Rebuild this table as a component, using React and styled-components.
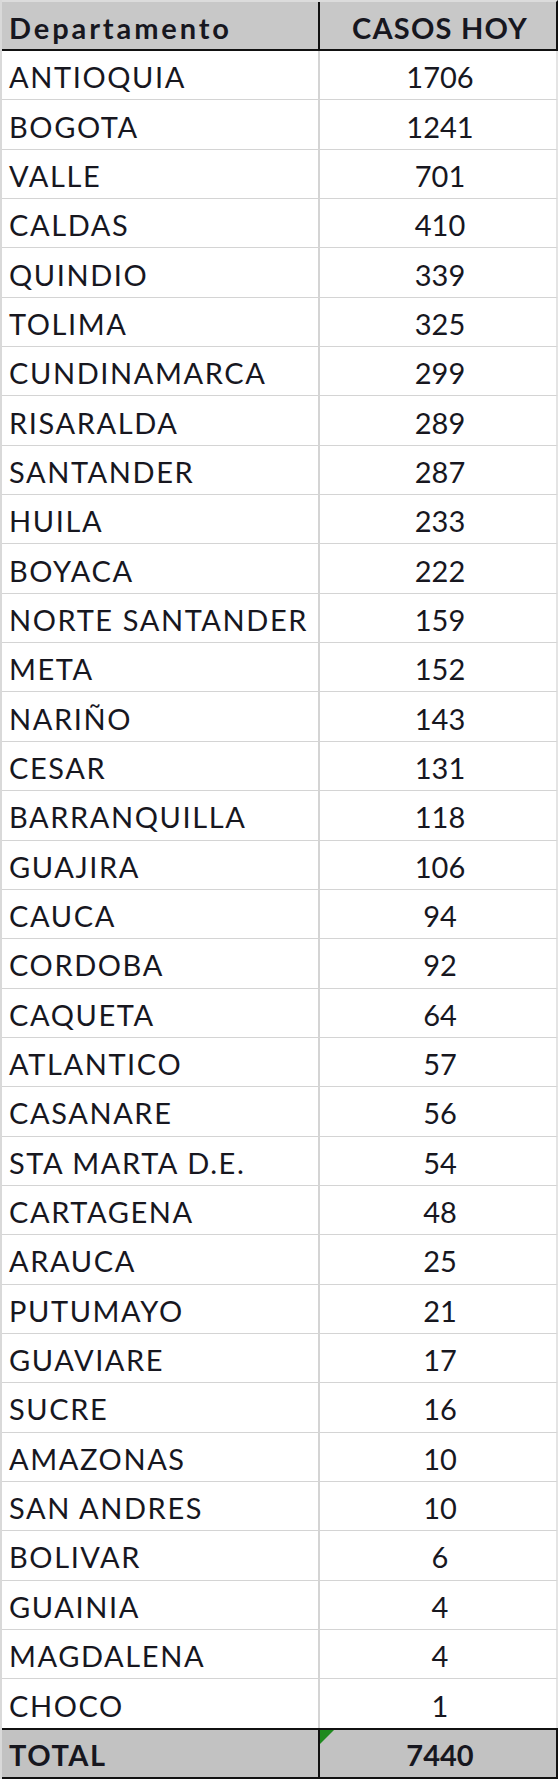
import React from "react";
import styled, { createGlobalStyle, css } from "styled-components";

const Global = createGlobalStyle`
  html, body { margin: 0; padding: 0; background: #ffffff; }
  body { font-family: Lato, "Open Sans", "Liberation Sans", sans-serif; }
`;

const rows = [
  ["ANTIOQUIA", 1706],
  ["BOGOTA", 1241],
  ["VALLE", 701],
  ["CALDAS", 410],
  ["QUINDIO", 339],
  ["TOLIMA", 325],
  ["CUNDINAMARCA", 299],
  ["RISARALDA", 289],
  ["SANTANDER", 287],
  ["HUILA", 233],
  ["BOYACA", 222],
  ["NORTE SANTANDER", 159],
  ["META", 152],
  ["NARIÑO", 143],
  ["CESAR", 131],
  ["BARRANQUILLA", 118],
  ["GUAJIRA", 106],
  ["CAUCA", 94],
  ["CORDOBA", 92],
  ["CAQUETA", 64],
  ["ATLANTICO", 57],
  ["CASANARE", 56],
  ["STA MARTA D.E.", 54],
  ["CARTAGENA", 48],
  ["ARAUCA", 25],
  ["PUTUMAYO", 21],
  ["GUAVIARE", 17],
  ["SUCRE", 16],
  ["AMAZONAS", 10],
  ["SAN ANDRES", 10],
  ["BOLIVAR", 6],
  ["GUAINIA", 4],
  ["MAGDALENA", 4],
  ["CHOCO", 1],
];

const Sheet = styled.div`
  width: 558px;
  display: flex;
  flex-direction: column;
  border-left: 2px solid #d9d9d9;
  box-sizing: border-box;
  color: #17171f;
`;

const Row = styled.div`
  display: grid;
  grid-template-columns: 318px 1fr;
  box-sizing: border-box;
  ${(p) =>
    p.$kind === "body"
      ? css`
          height: 49.35px;
          background: #ffffff;
          border-bottom: 1px solid #d4d4d4;
          border-right: 2px solid #e4e4e4;
        `
      : css`
          height: 51px;
          font-weight: 700;
          border-right: 2px solid #111111;
          border-bottom: 2px solid #111111;
        `}
  ${(p) =>
    p.$kind === "head" &&
    css`
      background: #c8c8c8;
      border-top: 2px solid #dcdcdc;
    `}
  ${(p) =>
    p.$kind === "total" &&
    css`
      background: #c2c2c2;
      border-top: 2px solid #111111;
      margin-top: -1px;
    `}
`;

const Cell = styled.div`
  position: relative;
  display: flex;
  align-items: center;
  box-sizing: border-box;
  font-size: 29px;
  line-height: 1;
  padding-top: 3px;
  white-space: nowrap;
  letter-spacing: ${(p) => p.$spacing || 0}px;
  ${(p) =>
    p.$num
      ? css`
          justify-content: center;
          padding-left: 4px;
        `
      : css`
          padding-left: 7px;
          border-right: ${p.$kind === "body" ? "2px solid #d4d4d4" : "2px solid #111111"};
        `}
`;

const ErrorMark = styled.span`
  position: absolute;
  top: 0;
  left: 0;
  width: 0;
  height: 0;
  border-top: 14px solid #1e8a1e;
  border-right: 14px solid transparent;
`;

export default function App() {
  return (
    <>
      <Global />
      <Sheet>
        <Row $kind="head">
          <Cell $kind="head" $spacing={2.9}>Departamento</Cell>
          <Cell $kind="head" $num $spacing={1.2}>CASOS HOY</Cell>
        </Row>
        {rows.map(([name, n]) => (
          <Row key={name} $kind="body">
            <Cell $kind="body" $spacing={1.6}>{name}</Cell>
            <Cell $kind="body" $num>{n}</Cell>
          </Row>
        ))}
        <Row $kind="total">
          <Cell $kind="total" $spacing={1.5}>TOTAL</Cell>
          <Cell $kind="total" $num>
            <ErrorMark />
            7440
          </Cell>
        </Row>
      </Sheet>
    </>
  );
}
